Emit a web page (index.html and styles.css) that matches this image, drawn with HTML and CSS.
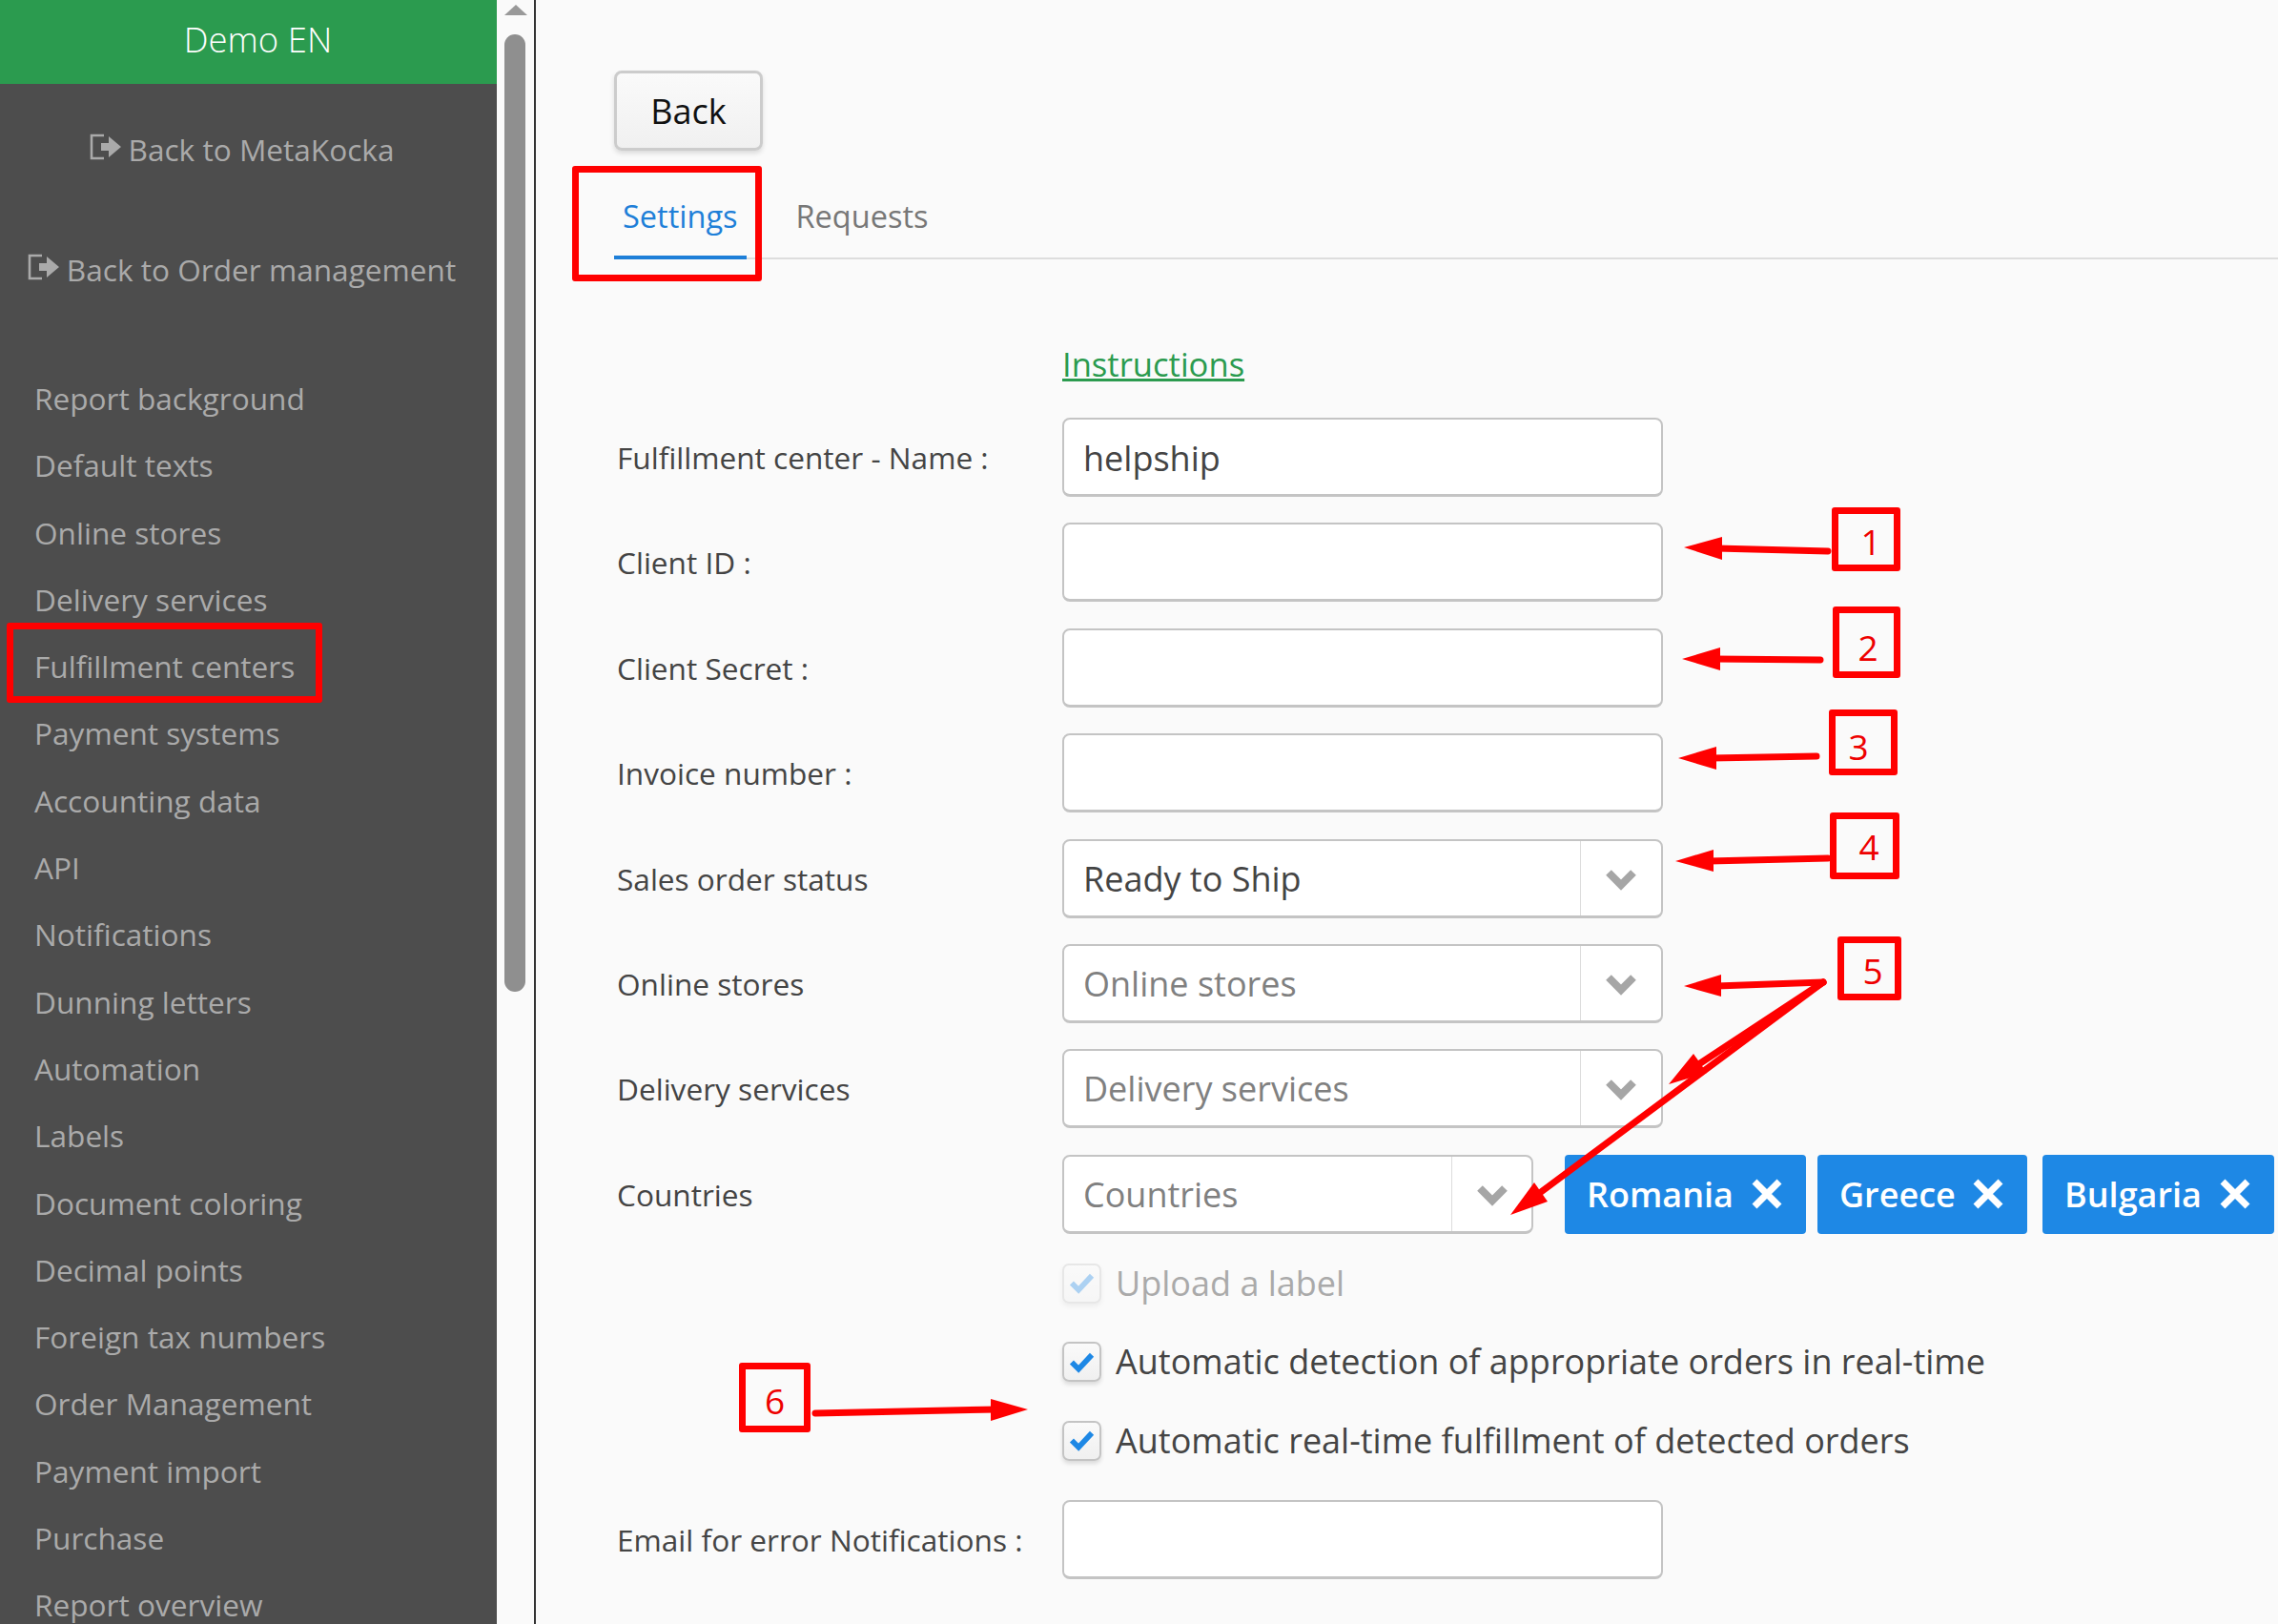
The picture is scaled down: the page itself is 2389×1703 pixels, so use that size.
FILE: index.html
```html
<!DOCTYPE html>
<html lang="en">
<head>
    <meta charset="UTF-8">
    <title>Fulfillment centers</title>
    <link rel="stylesheet" href="styles.css">
</head>
<body>

<div class="page">
    <aside class="sidebar">
        <div class="brand">Demo EN</div>
        <a class="back-link first">
            <svg class="back-icon" viewBox="0 0 34 28"><path d="M15 2H2v24h13" fill="none" stroke="#aaa" stroke-width="2.6"/><path d="M12 15V10h8V3l13 11-13 11v-7h-8z" fill="#aaa"/></svg>
            Back to MetaKocka
        </a>
        <a class="back-link second">
            <svg class="back-icon" viewBox="0 0 34 28"><path d="M15 2H2v24h13" fill="none" stroke="#aaa" stroke-width="2.6"/><path d="M12 15V10h8V3l13 11-13 11v-7h-8z" fill="#aaa"/></svg>
            Back to Order management
        </a>
        <nav class="menu">
            <a>Report background</a>
            <a>Default texts</a>
            <a>Online stores</a>
            <a>Delivery services</a>
            <a>Fulfillment centers</a>
            <a>Payment systems</a>
            <a>Accounting data</a>
            <a>API</a>
            <a>Notifications</a>
            <a>Dunning letters</a>
            <a>Automation</a>
            <a>Labels</a>
            <a>Document coloring</a>
            <a>Decimal points</a>
            <a>Foreign tax numbers</a>
            <a>Order Management</a>
            <a>Payment import</a>
            <a>Purchase</a>
            <a>Report overview</a>
        </nav>
    </aside>

    <div class="scrollbar">
        <div class="scroll-up"></div>
        <div class="scroll-thumb"></div>
    </div>

    <main class="content">
        <button class="back-btn">Back</button>

        <div class="tabs">
            <a class="tab active">Settings</a>
            <a class="tab">Requests</a>
        </div>

        <form class="settings">
            <div class="row-link"><a class="instructions">Instructions</a></div>

            <div class="row">
                <label>Fulfillment center - Name :</label>
                <div class="field"><input class="input" type="text" value="helpship"></div>
            </div>
            <div class="row">
                <label>Client ID :</label>
                <div class="field"><input class="input" type="text"></div>
            </div>
            <div class="row">
                <label>Client Secret :</label>
                <div class="field"><input class="input" type="text"></div>
            </div>
            <div class="row">
                <label>Invoice number :</label>
                <div class="field"><input class="input" type="text"></div>
            </div>
            <div class="row">
                <label>Sales order status</label>
                <div class="field">
                    <div class="select">
                        <span class="select-text">Ready to Ship</span>
                        <span class="select-arrow"><svg viewBox="0 0 34 24"><path d="M4 4l13 13L30 4" fill="none" stroke="#a6a6a6" stroke-width="8"/></svg></span>
                    </div>
                </div>
            </div>
            <div class="row">
                <label>Online stores</label>
                <div class="field">
                    <div class="select">
                        <span class="select-text placeholder">Online stores</span>
                        <span class="select-arrow"><svg viewBox="0 0 34 24"><path d="M4 4l13 13L30 4" fill="none" stroke="#a6a6a6" stroke-width="8"/></svg></span>
                    </div>
                </div>
            </div>
            <div class="row">
                <label>Delivery services</label>
                <div class="field">
                    <div class="select">
                        <span class="select-text placeholder">Delivery services</span>
                        <span class="select-arrow"><svg viewBox="0 0 34 24"><path d="M4 4l13 13L30 4" fill="none" stroke="#a6a6a6" stroke-width="8"/></svg></span>
                    </div>
                </div>
            </div>
            <div class="row">
                <label>Countries</label>
                <div class="field wide">
                    <div class="select short">
                        <span class="select-text placeholder">Countries</span>
                        <span class="select-arrow"><svg viewBox="0 0 34 24"><path d="M4 4l13 13L30 4" fill="none" stroke="#a6a6a6" stroke-width="8"/></svg></span>
                    </div>
                    <span class="chip chip-ro">Romania <svg viewBox="0 0 34 34"><path d="M4 4l26 26M30 4L4 30" stroke="#fff" stroke-width="7"/></svg></span>
                    <span class="chip chip-gr">Greece <svg viewBox="0 0 34 34"><path d="M4 4l26 26M30 4L4 30" stroke="#fff" stroke-width="7"/></svg></span>
                    <span class="chip chip-bg">Bulgaria <svg viewBox="0 0 34 34"><path d="M4 4l26 26M30 4L4 30" stroke="#fff" stroke-width="7"/></svg></span>
                </div>
            </div>

            <div class="check disabled">
                <span class="box"><svg viewBox="0 0 28 24"><path d="M3 12l7.5 7.5L25 4" fill="none" stroke="#1e88e5" stroke-width="6"/></svg></span>
                Upload a label
            </div>
            <div class="check">
                <span class="box"><svg viewBox="0 0 28 24"><path d="M3 12l7.5 7.5L25 4" fill="none" stroke="#1e88e5" stroke-width="6"/></svg></span>
                Automatic detection of appropriate orders in real-time
            </div>
            <div class="check">
                <span class="box"><svg viewBox="0 0 28 24"><path d="M3 12l7.5 7.5L25 4" fill="none" stroke="#1e88e5" stroke-width="6"/></svg></span>
                Automatic real-time fulfillment of detected orders
            </div>

            <div class="row email">
                <label>Email for error Notifications :</label>
                <div class="field"><input class="input" type="text"></div>
            </div>
        </form>
    </main>
</div>

<!-- red markup drawn on top of the screenshot -->
<div class="mark mark-settings"></div>
<div class="mark mark-menu"></div>
<div class="mark num n1">1</div>
<div class="mark num n2">2</div>
<div class="mark num n3">3</div>
<div class="mark num n4">4</div>
<div class="mark num n5">5</div>
<div class="mark num n6">6</div>

<svg class="arrows" viewBox="0 0 2389 1703">
    <g stroke="#f00" stroke-width="7" stroke-linecap="round" fill="none">
        <path d="M1917 578L1800 575"/>
        <path d="M1909 692L1798 691"/>
        <path d="M1905 793L1794 795"/>
        <path d="M1917 900L1792 903"/>
        <path d="M1912 1030L1800 1034"/>
        <path d="M1912 1030L1780 1117"/>
        <path d="M1912 1030L1612 1253"/>
        <path d="M855 1482L1045 1478"/>
    </g>
    <g fill="#f00">
        <path d="M1766 574L1806 563V587z"/>
        <path d="M1764 691L1804 679V703z"/>
        <path d="M1760 795L1800 783V807z"/>
        <path d="M1757 903L1797 891V914z"/>
        <path d="M1766 1034L1805 1022V1045z"/>
        <path d="M1750 1137L1776 1105L1790 1125z"/>
        <path d="M1584 1274L1609 1240L1623 1260z"/>
        <path d="M1078 1478L1039 1467V1490z"/>
    </g>
</svg>

</body>
</html>
```

FILE: styles.css
```css
html, body {
    margin: 0;
    padding: 0;
    height: 1703px;
    overflow: hidden;
}
body {
    font-family: "Open Sans", sans-serif;
    background-color: #fafafa;
    color: #444;
    position: relative;
}
a {
    display: block;
}

.page {
    display: flex;
    height: 1703px;
    overflow: hidden;
}

/* sidebar */
.sidebar {
    width: 521px;
    flex: none;
    background-color: #4d4d4d;
    color: #aaa;
    font-size: 31.6px;
}
.brand {
    height: 88px;
    line-height: 82px;
    padding-left: 20px;
    background-color: #2b9b4f;
    color: #fff;
    font-size: 36.5px;
    font-weight: 300;
    text-align: center;
}
.back-link {
    display: flex;
    justify-content: center;
    align-items: center;
    gap: 7px;
    height: 46px;
    padding-right: 14px;
}
.back-link.first {
    margin-top: 45px;
}
.back-link.second {
    margin-top: 80px;
}
.back-icon {
    width: 34px;
    height: 28px;
    margin-top: -4px;
}
.menu {
    margin-top: 78px;
}
.menu a {
    height: 70.3px;
    line-height: 70px;
    padding-left: 36px;
}

/* scrollbar column */
.scrollbar {
    width: 31px;
    flex: none;
    background-color: #fafafa;
    border-right: 2px solid #333;
    padding: 5px 0 0 8px;
    box-sizing: content-box;
}
.scroll-up {
    width: 0;
    height: 0;
    border-left: 12px solid transparent;
    border-right: 12px solid transparent;
    border-bottom: 11px solid #999;
}
.scroll-thumb {
    width: 22px;
    height: 1004px;
    margin-top: 20px;
    background-color: #8f8f8f;
    border-radius: 11px;
}

/* main */
.content {
    flex: 1;
    padding: 74px 0 0 82px;
    font-size: 31.6px;
    min-width: 0;
}
.back-btn {
    display: block;
    width: 156px;
    height: 84px;
    font-family: inherit;
    font-size: 36px;
    color: #111;
    background: linear-gradient(#fafafa, #f0f0f0);
    border: 3px solid #ccc;
    border-radius: 8px;
    box-shadow: 0 3px 5px rgba(0, 0, 0, 0.12);
}
.tabs {
    display: flex;
    height: 114px;
    border-bottom: 2px solid #ddd;
    box-sizing: border-box;
    align-items: flex-end;
}
.tab {
    height: 82px;
    line-height: 74px;
    padding: 0 9px;
    font-size: 32.5px;
    color: #777;
    margin-right: 43px;
    box-sizing: border-box;
    margin-bottom: -2px;
}
.tab.active {
    color: #1e7fd8;
    border-bottom: 4px solid #1e7fd8;
}

.row-link {
    margin-top: 82px;
    padding-left: 470px;
    height: 84px;
}
.instructions {
    font-size: 34.6px;
    color: #2b9b4f;
    text-decoration: underline;
    line-height: 56px;
}
.row {
    display: flex;
    align-items: center;
    height: 83px;
    margin-bottom: 27.4px;
}
.row label {
    width: 467px;
    flex: none;
    padding-left: 3px;
}
.field {
    width: 630px;
    flex: none;
}
.field.wide {
    width: auto;
    display: flex;
    align-items: center;
}
.input, .select {
    display: flex;
    width: 630px;
    height: 83px;
    background-color: #fff;
    border: 2px solid #c4c4c4;
    border-bottom-width: 3px;
    border-radius: 8px;
    box-sizing: border-box;
    font-family: inherit;
    font-size: 36px;
    color: #444;
    padding: 0;
}
.input {
    padding: 2px 20px 0;
}
.select.short {
    width: 494px;
}
.select-text {
    flex: 1;
    line-height: 79px;
    padding-left: 20px;
}
.placeholder {
    color: #808080;
}
.select-arrow {
    width: 85px;
    flex: none;
    border-left: 1px solid #ddd;
    display: flex;
    align-items: center;
    justify-content: center;
    padding-top: 4px;
    box-sizing: border-box;
}
.short .select-arrow {
    width: 84px;
}
.select-arrow svg {
    width: 34px;
    height: 24px;
}

.chip {
    display: flex;
    align-items: center;
    justify-content: space-between;
    height: 83px;
    box-sizing: border-box;
    padding: 0 24px 0 23px;
    background-color: #1e88e5;
    color: #fff;
    font-size: 36px;
    font-weight: 600;
    border-radius: 4px;
    white-space: nowrap;
}
.chip svg {
    width: 34px;
    height: 34px;
    flex: none;
}
.chip-ro {
    margin-left: 33px;
    width: 253px;
}
.chip-gr {
    margin-left: 12px;
    width: 220px;
}
.chip-bg {
    margin-left: 16px;
    width: 243px;
}

.check {
    display: flex;
    align-items: center;
    gap: 15px;
    height: 42px;
    margin-left: 470px;
    margin-bottom: 40.5px;
    font-size: 36px;
    line-height: 44px;
}
.check.disabled {
    color: #aaa;
    margin-top: 31px;
}
.check.disabled .box {
    opacity: 0.35;
}
.box {
    display: flex;
    align-items: center;
    justify-content: center;
    width: 41px;
    height: 42px;
    background: linear-gradient(#fafafa, #f0f0f0);
    border: 2px solid #c4c4c4;
    border-radius: 7px;
    box-sizing: border-box;
    box-shadow: 0 3px 4px rgba(0, 0, 0, 0.12);
}
.box svg {
    width: 27px;
    height: 23px;
}
.row.email {
    margin-top: 41px;
}

/* annotations */
.mark {
    position: absolute;
    border: 7px solid #f00;
    border-radius: 3px;
    box-sizing: border-box;
}
.mark-settings {
    left: 600px;
    top: 174px;
    width: 199px;
    height: 121px;
}
.mark-menu {
    left: 7px;
    top: 653px;
    width: 331px;
    height: 84px;
}
.num {
    color: #e00;
    font-size: 37px;
    display: flex;
    align-items: center;
    justify-content: center;
}
.n1 { left: 1921px; top: 532px; width: 72px; height: 67px; padding: 3px 0 0 10px; }
.n2 { left: 1922px; top: 636px; width: 71px; height: 75px; padding: 9px 0 0 3px; }
.n3 { left: 1918px; top: 744px; width: 72px; height: 69px; padding: 8px 10px 0 0; }
.n4 { left: 1919px; top: 852px; width: 73px; height: 70px; padding-left: 9px; }
.n5 { left: 1927px; top: 982px; width: 67px; height: 67px; padding: 4px 0 0 7px; }
.n6 { left: 775px; top: 1429px; width: 75px; height: 73px; padding-top: 6px; }
.arrows {
    position: absolute;
    left: 0;
    top: 0;
    width: 2389px;
    height: 1703px;
    pointer-events: none;
}
```
